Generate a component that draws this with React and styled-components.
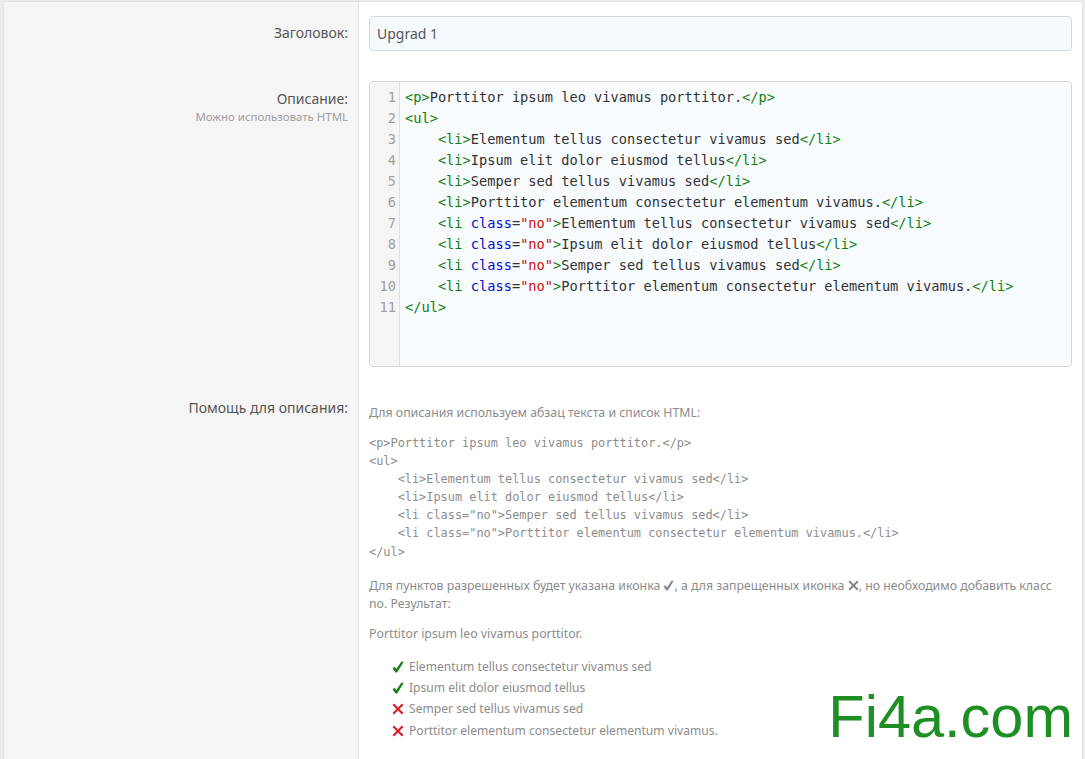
import { createGlobalStyle, styled } from "styled-components";

const GlobalStyle = createGlobalStyle`
  html, body {
    margin: 0;
    padding: 0;
    height: 759px;
    overflow: hidden;
    background: #ebebeb;
  }
  body {
    font-family: "Noto Sans", "Open Sans", sans-serif;
    font-size: 14px;
    color: #555;
  }
`;

const tab = "    ";

const editorLines = [
  [["t", "<p>"], ["x", "Porttitor ipsum leo vivamus porttitor."], ["t", "</p>"]],
  [["t", "<ul>"]],
  [["x", tab], ["t", "<li>"], ["x", "Elementum tellus consectetur vivamus sed"], ["t", "</li>"]],
  [["x", tab], ["t", "<li>"], ["x", "Ipsum elit dolor eiusmod tellus"], ["t", "</li>"]],
  [["x", tab], ["t", "<li>"], ["x", "Semper sed tellus vivamus sed"], ["t", "</li>"]],
  [["x", tab], ["t", "<li>"], ["x", "Porttitor elementum consectetur elementum vivamus."], ["t", "</li>"]],
  [["x", tab], ["t", "<li "], ["a", "class"], ["x", "="], ["s", '"no"'], ["t", ">"], ["x", "Elementum tellus consectetur vivamus sed"], ["t", "</li>"]],
  [["x", tab], ["t", "<li "], ["a", "class"], ["x", "="], ["s", '"no"'], ["t", ">"], ["x", "Ipsum elit dolor eiusmod tellus"], ["t", "</li>"]],
  [["x", tab], ["t", "<li "], ["a", "class"], ["x", "="], ["s", '"no"'], ["t", ">"], ["x", "Semper sed tellus vivamus sed"], ["t", "</li>"]],
  [["x", tab], ["t", "<li "], ["a", "class"], ["x", "="], ["s", '"no"'], ["t", ">"], ["x", "Porttitor elementum consectetur elementum vivamus."], ["t", "</li>"]],
  [["t", "</ul>"]],
];

const helpCode = `<p>Porttitor ipsum leo vivamus porttitor.</p>
<ul>
    <li>Elementum tellus consectetur vivamus sed</li>
    <li>Ipsum elit dolor eiusmod tellus</li>
    <li class="no">Semper sed tellus vivamus sed</li>
    <li class="no">Porttitor elementum consectetur elementum vivamus.</li>
</ul>`;

const results = [
  { text: "Elementum tellus consectetur vivamus sed", ok: true },
  { text: "Ipsum elit dolor eiusmod tellus", ok: true },
  { text: "Semper sed tellus vivamus sed", ok: false },
  { text: "Porttitor elementum consectetur elementum vivamus.", ok: false },
];

function CheckMark({ size = 13, color = "#17801a" }) {
  return (
    <svg width={size} height={size} viewBox="0 0 14 14">
      <path d="M0.6 8.4 L3 6.8 L5 9.4 L11 .6 L13.6 1.2 L6 13.4 L4.2 13.4 Z" fill={color} />
    </svg>
  );
}

function CrossMark({ size = 13, color = "#d8202a" }) {
  return (
    <svg width={size} height={size} viewBox="0 0 14 14">
      <path d="M1.5 1.5 L12.5 12.5 M12.5 1.5 L1.5 12.5" stroke={color} strokeWidth="2.6" fill="none" />
    </svg>
  );
}

export default function App() {
  return (
    <Panel>
      <GlobalStyle />
      <Row $height={65}>
        <LabelCol $top={20}>
          <Label>Заголовок:</Label>
        </LabelCol>
        <FieldCol>
          <TextInput readOnly value="Upgrad 1" />
        </FieldCol>
      </Row>
      <Row $height={316}>
        <LabelCol $top={21}>
          <Label>Описание:</Label>
          <Hint>Можно использовать HTML</Hint>
        </LabelCol>
        <FieldCol>
          <Editor>
            <Gutter>
              {editorLines.map((_, i) => (
                <div key={i}>{i + 1}</div>
              ))}
            </Gutter>
            <Code>
              {editorLines.map((line, i) => (
                <div key={i}>
                  {line.map(([kind, text], j) => (
                    <Token key={j} $kind={kind}>{text}</Token>
                  ))}
                </div>
              ))}
            </Code>
          </Editor>
        </FieldCol>
      </Row>
      <Row $grow>
        <LabelCol $top={14}>
          <Label>Помощь для описания:</Label>
        </LabelCol>
        <HelpCol>
          <HelpText>Для описания используем абзац текста и список HTML:</HelpText>
          <HelpCode>{helpCode}</HelpCode>
          <HelpText>
            Для пунктов разрешенных будет указана иконка{" "}
            <CheckMark size={11} color="#888" />, а для запрещенных иконка{" "}
            <CrossMark size={11} color="#888" />, но необходимо добавить класс
            <br />
            no. Результат:
          </HelpText>
          <HelpText>Porttitor ipsum leo vivamus porttitor.</HelpText>
          <ResultList>
            {results.map((item) => (
              <ResultItem key={item.text}>
                {item.ok ? <CheckMark size={12} /> : <CrossMark size={12} />}
                {item.text}
              </ResultItem>
            ))}
          </ResultList>
        </HelpCol>
      </Row>
      <Watermark>Fi4a.com</Watermark>
    </Panel>
  );
}

const Panel = styled.div`
  position: relative;
  box-sizing: border-box;
  display: flex;
  flex-direction: column;
  width: 1080px;
  height: 758px;
  margin: 1px 0 0 3px;
  background: #fff;
  border-top: 1px solid #e4e4e4;
  border-left: 1px solid #e4e4e4;
  border-right: 1px solid #e4e4e4;
  border-radius: 3px 3px 0 0;
  overflow: hidden;
`;

const Row = styled.div`
  display: flex;
  height: ${(p) => (p.$height ? `${p.$height}px` : "auto")};
  flex: ${(p) => (p.$grow ? "1" : "none")};
`;

const LabelCol = styled.div`
  box-sizing: border-box;
  flex: none;
  width: 355px;
  padding: ${(p) => p.$top}px 10px 0 0;
  text-align: right;
  background: #f5f5f5;
  border-right: 1px solid #e4e4e4;
`;

const Label = styled.div`
  font-size: 14px;
  line-height: 22px;
  color: #555;
`;

const Hint = styled.div`
  font-size: 11.45px;
  line-height: 16px;
  margin-top: -1px;
  color: #a0a0a0;
`;

const FieldCol = styled.div`
  flex: 1;
  padding: 14px 10px 0 10px;
`;

const TextInput = styled.input`
  box-sizing: border-box;
  display: block;
  width: 100%;
  height: 35px;
  padding: 0 7px;
  font: inherit;
  font-size: 14px;
  color: #555;
  background: #f5fafe;
  border: 1px solid #d5d9dc;
  border-radius: 4px;
  outline: none;
`;

const Editor = styled.div`
  box-sizing: border-box;
  display: flex;
  height: 286px;
  background: #f7fbfe;
  border: 1px solid #d5d9dc;
  border-radius: 4px;
  overflow: hidden;
  font-family: "DejaVu Sans Mono", monospace;
  font-size: 13.67px;
  line-height: 21px;
`;

const Gutter = styled.div`
  box-sizing: border-box;
  flex: none;
  width: 30px;
  padding: 4.5px 3px 0 0;
  text-align: right;
  color: #a0a0a0;
  background: #f5f5f5;
  border-right: 1px solid #e0e0e0;
`;

const Code = styled.div`
  flex: 1;
  padding: 4.5px 0 0 5px;
  white-space: pre;
  color: #333;
`;

const tokenColors = { t: "#108010", a: "#0a0acc", s: "#cc1010", x: "#333" };

const Token = styled.span`
  color: ${(p) => tokenColors[p.$kind]};
`;

const HelpCol = styled.div`
  flex: 1;
  padding: 21px 12px 0 10px;
  color: #8c8c8c;
  font-size: 12px;
  line-height: 18px;
`;

const HelpText = styled.p`
  margin: 0 0 12px;
  font-size: 12.3px;
  svg {
    vertical-align: -1px;
  }
`;

const HelpCode = styled.pre`
  margin: 12px 0 16px;
  font-family: "DejaVu Sans Mono", monospace;
  font-size: 11.9px;
  line-height: 18.1px;
  color: #8c8c8c;
`;

const ResultList = styled.ul`
  margin: 14px 0 0;
  padding: 0 0 0 23px;
  list-style: none;
`;

const ResultItem = styled.li`
  display: flex;
  align-items: center;
  gap: 5px;
  height: 21px;
  font-size: 12.1px;
  &:last-child {
    margin-top: 1px;
  }
`;

const Watermark = styled.div`
  position: absolute;
  right: 9px;
  bottom: 13px;
  font-family: "Liberation Sans", Arial, sans-serif;
  font-size: 59.5px;
  line-height: 1;
  color: #1e8f24;
`;
